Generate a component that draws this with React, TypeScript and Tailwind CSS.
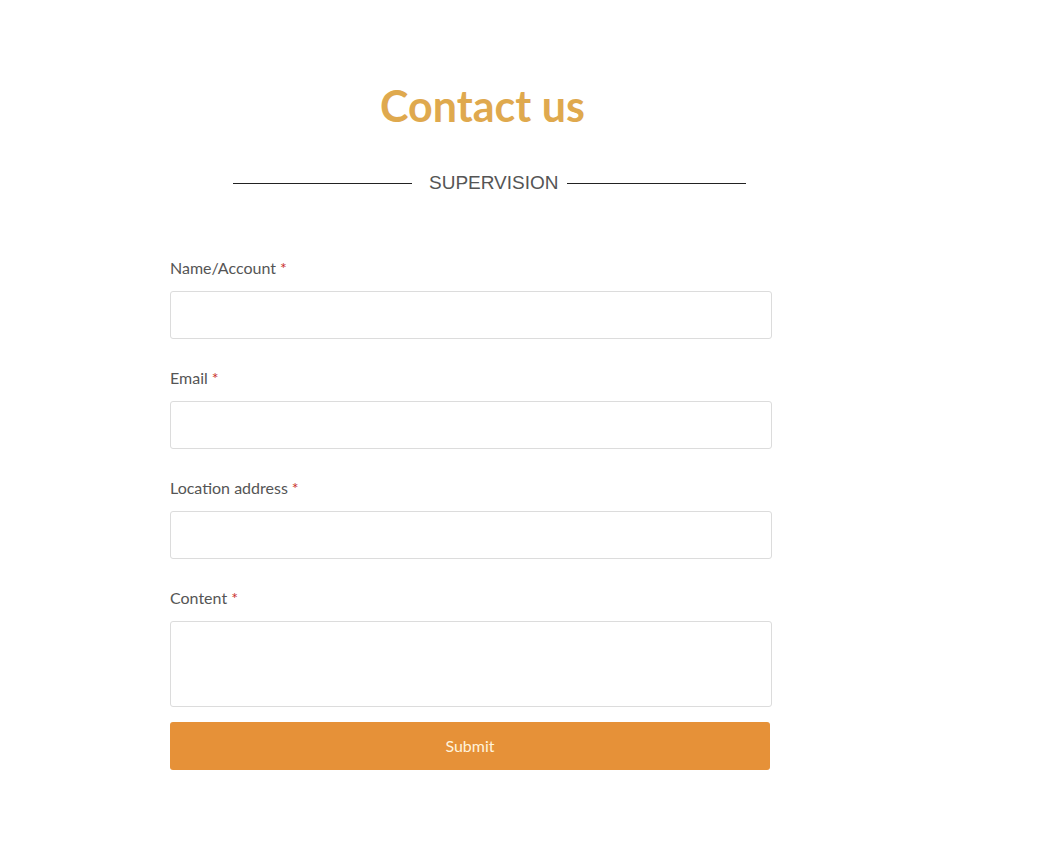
import React from "react";

const fields = [
  { label: "Name/Account", type: "input" },
  { label: "Email", type: "input" },
  { label: "Location address", type: "input" },
  { label: "Content", type: "textarea" },
];

export default function App() {
  return (
    <div className="min-h-[848px] w-full bg-white" style={{ fontFamily: "Lato, 'Noto Sans', sans-serif" }}>
      <div className="pl-[170px] pt-[80px]">
        <h1 className="w-[625px] text-center text-[43px] font-bold leading-[52px] text-[#dfa94e]">Contact us</h1>
        <div className="ml-[63px] mt-[39px] flex h-[24px] items-center">
          <div className="h-px w-[179px] bg-[#222]" />
          <span className="ml-[17px] mr-[8px] text-[19px] leading-[24px] text-[#555]" style={{ fontFamily: "'Liberation Sans', Arial, sans-serif" }}>
            SUPERVISION
          </span>
          <div className="h-px w-[179px] bg-[#222]" />
        </div>
        <form className="mt-[63px] w-[602px]" onSubmit={(e) => e.preventDefault()}>
          {fields.map((f, i) => (
            <div key={f.label} className={i === fields.length - 1 ? "mb-[15px]" : "mb-[29px]"}>
              <label className="block text-[16px] leading-[20px] text-[#555]">
                {f.label}
                <span className="ml-[4px] text-[#c9302c]">*</span>
              </label>
              {f.type === "input" ? (
                <input className="mt-[13px] block h-[48px] w-full rounded-[3px] border border-[#dcdcdc] bg-white px-3 outline-none" />
              ) : (
                <textarea className="mt-[13px] block h-[86px] w-full resize-none rounded-[3px] border border-[#dcdcdc] bg-white px-3 outline-none" />
              )}
            </div>
          ))}
          <button
            type="submit"
            className="block h-[48px] w-[600px] rounded-[3px] bg-[#e69138] text-[16px] text-[#fff3dc]"
          >
            Submit
          </button>
        </form>
      </div>
    </div>
  );
}
